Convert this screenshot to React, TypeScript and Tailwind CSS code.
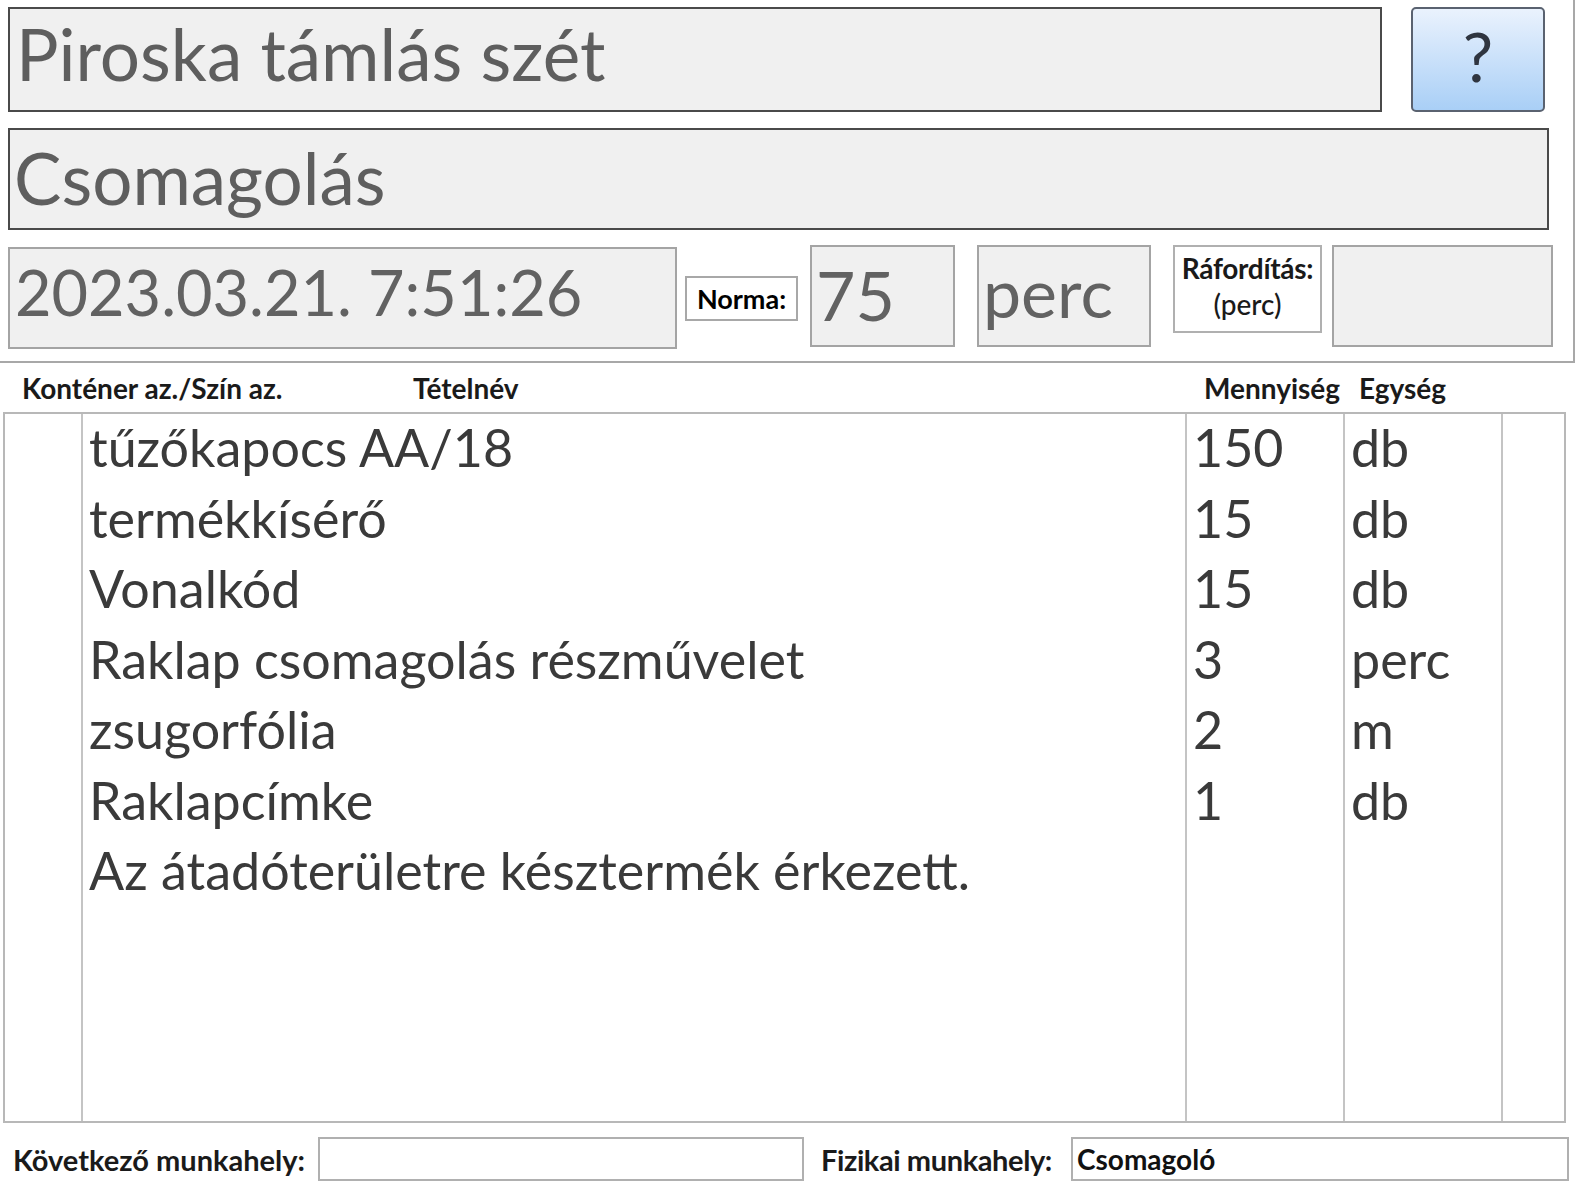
import React from "react";

const rows: [string, string, string][] = [
  ["tűzőkapocs AA/18", "150", "db"],
  ["termékkísérő", "15", "db"],
  ["Vonalkód", "15", "db"],
  ["Raklap csomagolás részművelet", "3", "perc"],
  ["zsugorfólia", "2", "m"],
  ["Raklapcímke", "1", "db"],
  ["Az átadóterületre késztermék érkezett.", "", ""],
];

export default function App() {
  const font = { fontFamily: "Lato, 'Open Sans', sans-serif" } as const;
  return (
    <div className="w-[1577px] h-[1200px] bg-white overflow-hidden" style={font}>
      {/* top section */}
      <div className="w-[1575px] h-[363px] border-r-2 border-b-2 border-[#a8a8a8] pl-[8px] pt-[7px]">
        <div className="flex">
          <div className="w-[1374px] h-[105px] bg-[#f0f0f0] border-2 border-[#4a4a4a] flex items-center pl-[6px] text-[#5e5e5e] text-[71px] leading-none">
            <span className="-mt-[12px]">Piroska támlás szét</span>
          </div>
          <div className="ml-[29px] w-[134px] h-[105px] rounded-[5px] border-2 border-[#5a6270] bg-gradient-to-b from-[#eaf2fd] to-[#a9cff6] flex items-center justify-center text-[#2f3540] text-[68px] leading-none">
            <span className="-mt-[8px]">?</span>
          </div>
        </div>
        <div className="mt-[16px] w-[1541px] h-[102px] bg-[#f0f0f0] border-2 border-[#4a4a4a] flex items-center pl-[4px] text-[#5e5e5e] text-[71px] leading-none">
          <span className="-mt-[4px]">Csomagolás</span>
        </div>
        <div className="mt-[15px] flex items-start">
          <div className="mt-[2px] w-[669px] h-[102px] bg-[#f0f0f0] border-2 border-[#a4a4a4] flex items-center pl-[5px] text-[#626262] text-[63px] leading-none">
            <span className="-mt-[14px]">2023.03.21. 7:51:26</span>
          </div>
          <div className="ml-[8px] mt-[31px] w-[113px] h-[45px] bg-white border-2 border-[#a8a8a8] flex items-center justify-center text-black font-bold text-[27px] leading-none">
            Norma:
          </div>
          <div className="ml-[12px] w-[145px] h-[102px] bg-[#f0f0f0] border-2 border-[#a4a4a4] flex items-center pl-[4px] text-[#626262] text-[68px] leading-none">
            <span className="-mt-[2px]">75</span>
          </div>
          <div className="ml-[22px] w-[174px] h-[102px] bg-[#f0f0f0] border-2 border-[#a4a4a4] flex items-center pl-[4px] text-[#626262] text-[68px] leading-none">
            <span className="-mt-[8px]">perc</span>
          </div>
          <div className="ml-[22px] w-[149px] h-[88px] bg-white border-2 border-[#b0b0b0] flex flex-col items-center justify-center text-[#1a1a1a] font-bold text-[28px] leading-[36px]">
            <span className="tracking-[-0.3px] -mt-[6px]">Ráfordítás:</span>
            <span className="font-medium">(perc)</span>
          </div>
          <div className="ml-[10px] w-[221px] h-[102px] bg-[#f0f0f0] border-2 border-[#a4a4a4]" />
        </div>
      </div>

      {/* header labels */}
      <div className="h-[49px] flex items-center text-[#1a1a1a] font-bold text-[28px] leading-none">
        <span className="ml-[22px] w-[391px]">Konténer az./Szín az.</span>
        <span className="w-[791px]">Tételnév</span>
        <span className="w-[155px]">Mennyiség</span>
        <span>Egység</span>
      </div>

      {/* table */}
      <div className="ml-[3px] w-[1563px] h-[711px] border-2 border-[#b8b8b8] flex">
        <div className="w-[78px] border-r-2 border-[#c4c4c4]" />
        <div className="w-[1104px] border-r-2 border-[#c4c4c4]">
          {rows.map((r, i) => (
            <div key={i} className="h-[70.5px] flex items-center pl-[6px] text-[#3a3a3a] text-[52px] leading-none">
              <span className="-mt-[4px]">{r[0]}</span>
            </div>
          ))}
        </div>
        <div className="w-[158px] border-r-2 border-[#c4c4c4]">
          {rows.map((r, i) => (
            <div key={i} className="h-[70.5px] flex items-center pl-[6px] text-[#3a3a3a] text-[52px] leading-none">
              <span className="-mt-[4px]">{r[1]}</span>
            </div>
          ))}
        </div>
        <div className="w-[158px] border-r-2 border-[#c4c4c4]">
          {rows.map((r, i) => (
            <div key={i} className="h-[70.5px] flex items-center pl-[6px] text-[#3a3a3a] text-[52px] leading-none">
              <span className="-mt-[4px]">{r[2]}</span>
            </div>
          ))}
        </div>
        <div className="flex-1" />
      </div>

      {/* bottom */}
      <div className="mt-[14px] flex items-center text-[#1a1a1a] font-bold text-[29px] leading-none">
        <span className="ml-[13px] w-[305px]">Következő munkahely:</span>
        <div className="w-[486px] h-[44px] border-2 border-[#b0b0b0] bg-white" />
        <span className="ml-[17px] w-[250px] tracking-[-0.4px]">Fizikai munkahely:</span>
        <div className="w-[498px] h-[44px] border-2 border-[#b0b0b0] bg-white flex items-center pl-[4px] text-[#111] text-[28px]">
          Csomagoló
        </div>
      </div>
    </div>
  );
}
